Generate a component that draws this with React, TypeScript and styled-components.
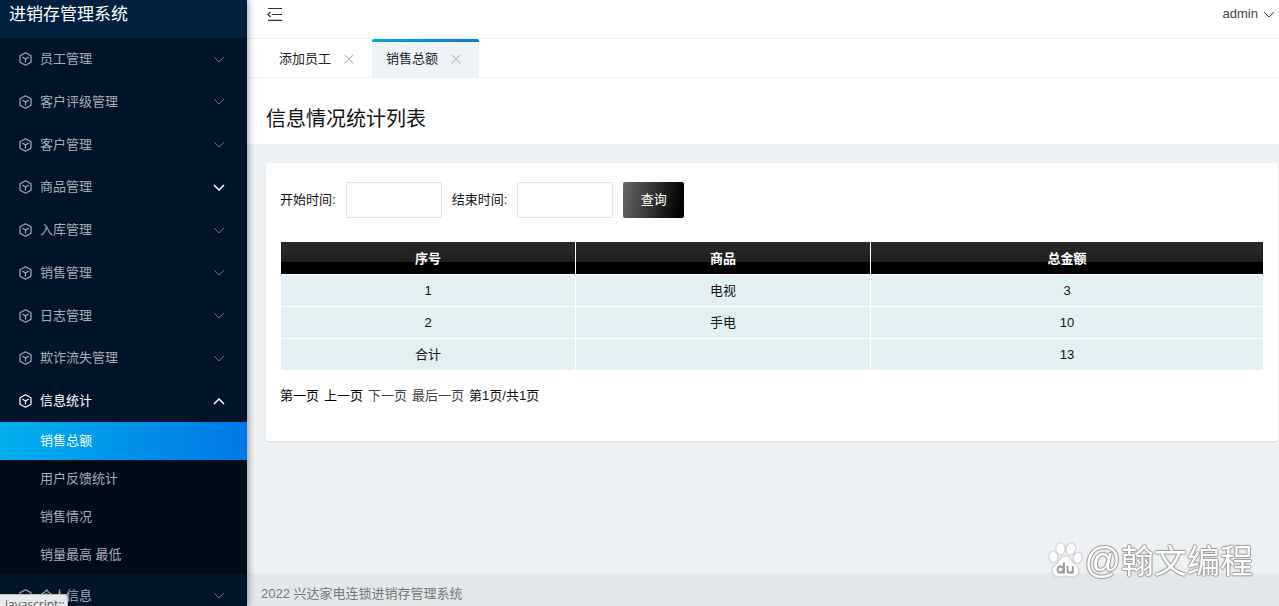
import React from "react";
import styled, { createGlobalStyle } from "styled-components";

const GlobalStyle = createGlobalStyle`
  *, *::before, *::after { box-sizing: border-box; }
  body {
    margin: 0;
    color: #111;
    background: #eef1f4;
    font: 13px/20px "Liberation Sans", "Noto Sans CJK SC", sans-serif;
  }
  button, input { font: inherit; }
  a { color: inherit; text-decoration: none; }
  ul { list-style: none; margin: 0; padding: 0; }
`;

const Shell = styled.div`
  display: flex;
  height: 100vh;
  overflow: hidden;
`;

const Sidebar = styled.aside`
  flex: 0 0 247px;
  z-index: 1;
  overflow: hidden;
  color: #a6adb4;
  background: #001529;
  box-shadow: 2px 0 6px rgba(0, 21, 41, 0.35);
`;

const Brand = styled.div`
  height: 38px;
  padding: 0 9px;
  color: #fff;
  background: #002140;
  font-size: 17px;
  line-height: 30px;
`;

const Menu = styled.ul`
  display: flex;
  flex-direction: column;
  justify-content: space-between;
  min-height: 579px;
`;

const MenuButton = styled.button<{ $open?: boolean; $strong?: boolean }>`
  display: flex;
  align-items: center;
  gap: 8px;
  width: 100%;
  height: 42px;
  padding: 0 22px 0 19px;
  border: 0;
  background: none;
  color: ${(p) => (p.$open ? "#fff" : "#a6adb4")};
  text-align: left;
  cursor: pointer;

  span { flex: 1; }
  svg:last-child {
    color: ${(p) => (p.$open || p.$strong ? "#fff" : "#6b7681")};
    stroke-width: ${(p) => (p.$open || p.$strong ? 1.5 : 1)};
  }
`;

const SubMenu = styled.ul`
  background: #000c17;
`;

const SubLink = styled.a<{ $active?: boolean }>`
  display: block;
  padding: 0 40px;
  line-height: 38px;
  color: ${(p) => (p.$active ? "#fff" : "#a6adb4")};
  background: ${(p) => (p.$active ? "linear-gradient(90deg, #00b0ee, #0077e6)" : "none")};
`;

const Page = styled.div`
  display: flex;
  flex: 1;
  flex-direction: column;
  min-width: 0;
`;

const TopBar = styled.header`
  display: flex;
  align-items: center;
  justify-content: space-between;
  height: 39px;
  padding: 0 4px 10px 20px;
  border-bottom: 1px solid #f3f3f3;
  background: #fff;
`;

const PlainButton = styled.button`
  display: flex;
  align-items: center;
  gap: 5px;
  padding: 0;
  border: 0;
  background: none;
  color: #444;
  cursor: pointer;
`;

const Tabs = styled.nav`
  display: flex;
  height: 39px;
  padding-left: 18px;
  border-bottom: 1px solid #f0f0f2;
  background: #fff;
`;

const Tab = styled.div<{ $active?: boolean }>`
  display: flex;
  align-items: center;
  gap: 13px;
  padding: 1px 18px 0 14px;
  border-radius: 2px 2px 0 0;
  background: ${(p) =>
    p.$active
      ? "linear-gradient(90deg, #0aa3df, #0a78d6) top / 100% 3px no-repeat, #eef3fa"
      : "none"};
  color: #222;

  button { color: #bbb; }
`;

const PageHead = styled.div`
  padding: 28px 19px 12px;
  background: #fff;

  h1 {
    margin: 0;
    font-size: 20px;
    font-weight: 400;
    line-height: 26px;
  }
`;

const Main = styled.main`
  flex: 1;
  min-height: 0;
  padding: 19px 1px 0 19px;
`;

const Card = styled.section`
  padding: 19px 14px 35px;
  border-radius: 2px;
  background: #fff;
  box-shadow: 0 1px 2px rgba(0, 0, 0, 0.08);
`;

const Filters = styled.form`
  display: flex;
  align-items: center;
  gap: 10px;
`;

const DateInput = styled.input`
  width: 96px;
  height: 36px;
  padding: 0 8px;
  border: 1px solid #e6e6e6;
  border-radius: 2px;
  background: #fff;
`;

const QueryButton = styled.button`
  width: 61px;
  height: 36px;
  padding: 0;
  border: 0;
  border-radius: 2px;
  color: #fff;
  background: linear-gradient(100deg, #696969, #000 92%);
  cursor: pointer;
`;

const Table = styled.table`
  width: 100%;
  margin: 24px 0 16px;
  border-collapse: separate;
  border-spacing: 1px 0;
  table-layout: fixed;
  text-align: center;

  th, td {
    height: 32px;
    padding: 1px 0 0;
  }
  th {
    color: #fff;
    background: linear-gradient(#292929, #1f1f1f 62%, #000 62%);
  }
  td {
    border-top: 1px solid #fff;
    background: #e0f0f3;
    background-clip: padding-box;
  }
`;

const Pager = styled.nav`
  display: flex;
  gap: 5px;
`;

const PagerLink = styled.a<{ $muted?: boolean }>`
  color: ${(p) => (p.$muted ? "#444" : "#000")};
`;

const Footer = styled.footer`
  height: 33px;
  padding: 11px 14px 0;
  color: #777;
  background: #e4e7ea;
`;

const StatusBubble = styled.div`
  position: fixed;
  z-index: 2;
  left: 0;
  bottom: 0;
  width: 68px;
  height: 12px;
  padding-left: 5px;
  overflow: hidden;
  border: 1px solid #b8babd;
  border-width: 1px 1px 0 0;
  border-top-right-radius: 3px;
  color: #555;
  background: #e7eaed;
  font: 12px/19px "Open Sans", sans-serif;
  white-space: nowrap;
`;

const Watermark = styled.div`
  position: fixed;
  z-index: 2;
  right: 26px;
  bottom: 25px;
  display: flex;
  align-items: center;
  gap: 2px;
  color: #fff;
  font: 33px/40px "Noto Sans CJK SC", sans-serif;
  text-shadow: 1px 0 1px #999, -1px 0 1px #999, 0 1px 1px #999, 0 -1px 1px #999;
  pointer-events: none;

  svg { filter: drop-shadow(0 0 1px #999); }
`;

const At = styled.span`
  font: 36px/40px "Liberation Sans", sans-serif;
`;

const WatermarkName = styled.span`
  line-height: 34px;
  padding-bottom: 6px;
`;

const CubeIcon = () => (
  <svg width="13" height="14" viewBox="0 0 13 14" fill="none" stroke="currentColor" strokeWidth="1.2" strokeLinejoin="round" aria-hidden="true">
    <path d="M6.5 .8 12 3.8v6.4l-5.500 3L1 10.200V3.800z" />
    <path d="M3.300 5 6.500 6.900 9.700 5M6.500 6.900v3.700" />
  </svg>
);

const Chevron = ({ up = false }: { up?: boolean }) => (
  <svg width="12" height="7" viewBox="0 0 12 7" fill="none" stroke="currentColor" aria-hidden="true">
    <path d={up ? "M1 6l5-5 5 5" : "M1 1l5 5 5-5"} />
  </svg>
);

const CloseIcon = () => (
  <svg width="10" height="10" viewBox="0 0 10 10" stroke="currentColor" strokeWidth="1.100" aria-hidden="true">
    <path d="M.7 .7l8.600 8.600M9.300 .7.7 9.300" />
  </svg>
);

const FoldIcon = () => (
  <svg width="16" height="14" viewBox="0 0 16 14" fill="none" stroke="#333" strokeWidth="1.200" aria-hidden="true">
    <path d="M1 1.500h14M5 7.500h10M1 13.300h14M3.500 5 1 7.500 3.500 10" />
  </svg>
);

const PawLogo = () => (
  <svg width="33" height="36" viewBox="0 0 33 36" fill="#fff" aria-hidden="true">
    <ellipse cx="11.500" cy="6.800" rx="4.200" ry="5.500" />
    <ellipse cx="21.800" cy="7" rx="4.200" ry="5.500" transform="rotate(12 21.800 7)" />
    <ellipse cx="4.500" cy="14.800" rx="3.900" ry="5" transform="rotate(-14 4.500 14.800)" />
    <ellipse cx="28.600" cy="15.800" rx="3.900" ry="5" transform="rotate(12 28.600 15.800)" />
    <path d="M16.500 14.500c3.500 0 5 3.500 7 5.700 2.600 2.800 6 4.800 5.700 9-.3 4-3.600 5.600-6.700 5.300-2.200-.2-3.700-.8-6-.8s-3.800.6-6 .8c-3.100.3-6.400-1.300-6.700-5.300-.3-4.200 3.100-6.200 5.700-9 2-2.200 3.500-5.700 7-5.700z" />
    <g fill="none" stroke="#999" strokeWidth="1.900">
      <circle cx="11.500" cy="27.500" r="3" />
      <path d="M14.900 20.500v11M18.500 24v4.500q0 2.300 2.500 2.300t2.800-2.300V24v7.500" />
    </g>
  </svg>
);

const menu = [
  "员工管理",
  "客户评级管理",
  "客户管理",
  "商品管理",
  "入库管理",
  "销售管理",
  "日志管理",
  "欺诈流失管理",
  "信息统计",
  "个人信息",
];
const subMenu = ["销售总额", "用户反馈统计", "销售情况", "销量最高 最低"];
const rows = [
  ["1", "电视", "3"],
  ["2", "手电", "10"],
  ["合计", "", "13"],
];
const tabs = ["添加员工", "销售总额"];

export default function App() {
  return (
    <Shell>
      <GlobalStyle />
      <Sidebar>
        <Brand>进销存管理系统</Brand>
        <Menu>
          {menu.map((label) => {
            const open = label === "信息统计";
            return (
              <li key={label}>
                <MenuButton type="button" $open={open} $strong={label === "商品管理"} aria-expanded={open}>
                  <CubeIcon />
                  <span>{label}</span>
                  <Chevron up={open} />
                </MenuButton>
                {open && (
                  <SubMenu>
                    {subMenu.map((item, i) => (
                      <li key={item}>
                        <SubLink href="#" $active={i === 0}>{item}</SubLink>
                      </li>
                    ))}
                  </SubMenu>
                )}
              </li>
            );
          })}
        </Menu>
      </Sidebar>

      <Page>
        <TopBar>
          <PlainButton type="button" aria-label="折叠菜单"><FoldIcon /></PlainButton>
          <PlainButton type="button">admin<Chevron /></PlainButton>
        </TopBar>
        <Tabs>
          {tabs.map((label, i) => (
            <Tab key={label} $active={i === 1}>
              <a href="#">{label}</a>
              <PlainButton type="button" aria-label={`关闭${label}`}><CloseIcon /></PlainButton>
            </Tab>
          ))}
        </Tabs>
        <PageHead><h1>信息情况统计列表</h1></PageHead>
        <Main>
          <Card>
            <Filters onSubmit={(e) => e.preventDefault()}>
              <label htmlFor="start">开始时间:</label>
              <DateInput id="start" type="text" />
              <label htmlFor="end">结束时间:</label>
              <DateInput id="end" type="text" />
              <QueryButton type="submit">查询</QueryButton>
            </Filters>
            <Table>
              <colgroup>
                <col style={{ width: "30%" }} />
                <col style={{ width: "30%" }} />
                <col style={{ width: "40%" }} />
              </colgroup>
              <thead>
                <tr><th>序号</th><th>商品</th><th>总金额</th></tr>
              </thead>
              <tbody>
                {rows.map((row) => (
                  <tr key={row[0]}>
                    {row.map((cell, i) => <td key={i}>{cell}</td>)}
                  </tr>
                ))}
              </tbody>
            </Table>
            <Pager>
              <PagerLink href="#">第一页</PagerLink>
              <PagerLink href="#">上一页</PagerLink>
              <PagerLink href="#" $muted>下一页</PagerLink>
              <PagerLink href="#" $muted>最后一页</PagerLink>
              <span>第1页/共1页</span>
            </Pager>
          </Card>
        </Main>
        <Footer>2022 兴达家电连锁进销存管理系统</Footer>
      </Page>

      <StatusBubble>javascript:;</StatusBubble>
      <Watermark>
        <PawLogo />
        <span><At>@</At><WatermarkName>翰文编程</WatermarkName></span>
      </Watermark>
    </Shell>
  );
}
